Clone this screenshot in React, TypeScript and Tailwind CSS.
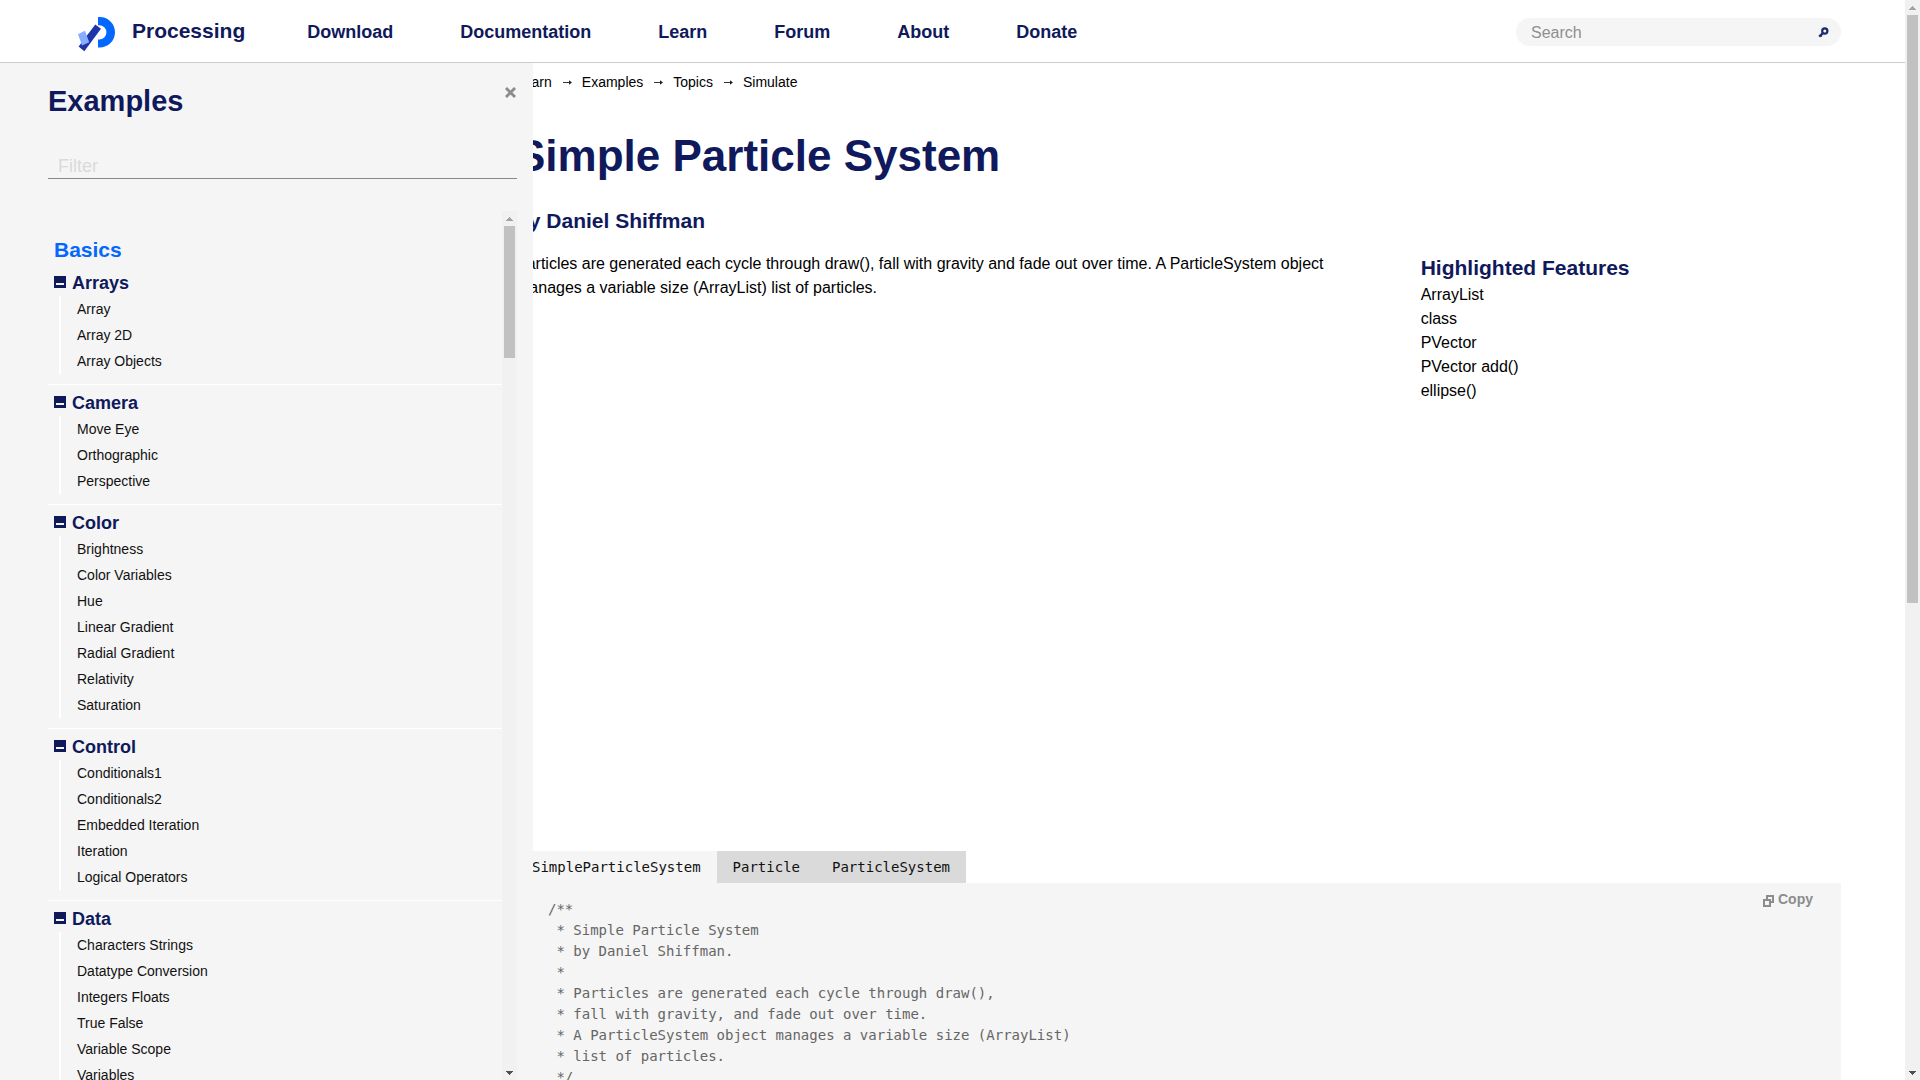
import { useState } from "react";
import clsx from "clsx";

const NAV_LINKS = ["Download", "Documentation", "Learn", "Forum", "About", "Donate"];

const CRUMBS = ["Learn", "Examples", "Topics", "Simulate"];

const FEATURES = ["ArrayList", "class", "PVector", "PVector add()", "ellipse()"];

const BASICS = [
  { name: "Arrays", items: ["Array", "Array 2D", "Array Objects"] },
  { name: "Camera", items: ["Move Eye", "Orthographic", "Perspective"] },
  {
    name: "Color",
    items: [
      "Brightness",
      "Color Variables",
      "Hue",
      "Linear Gradient",
      "Radial Gradient",
      "Relativity",
      "Saturation",
    ],
  },
  {
    name: "Control",
    items: ["Conditionals1", "Conditionals2", "Embedded Iteration", "Iteration", "Logical Operators"],
  },
  {
    name: "Data",
    items: [
      "Characters Strings",
      "Datatype Conversion",
      "Integers Floats",
      "True False",
      "Variable Scope",
      "Variables",
    ],
  },
];

const TABS = ["SimpleParticleSystem", "Particle", "ParticleSystem"];

const CODE = `/**
 * Simple Particle System
 * by Daniel Shiffman.
 *
 * Particles are generated each cycle through draw(),
 * fall with gravity, and fade out over time.
 * A ParticleSystem object manages a variable size (ArrayList)
 * list of particles.
 */`;

function Logo() {
  return (
    <svg width="37" height="35" viewBox="0 0 37 35" aria-hidden="true">
      <path
        d="M20 0h1.700a15.300 15.300 0 0 1 0 30.600H20v-8h1.200a7.200 7.200 0 0 0 0-14.400H20z"
        fill="#0468ff"
      />
      <path d="M17.300 7.500 23 11.800 6.300 34.200.6 29.600z" fill="#1f34ab" />
      <path d="M0 17.200 7 13.800 11.200 25.300 4 28.500z" fill="#85aeff" />
    </svg>
  );
}

function CrumbArrow() {
  return (
    <svg width="9" height="5" viewBox="0 0 9 5" aria-hidden="true">
      <path d="M0 2.500h8" stroke="#333333" strokeWidth="1" />
      <path d="M6 .3 9 2.500 6 4.700z" fill="#222222" />
    </svg>
  );
}

function ScrollTrack({ thumbClass }: { thumbClass: string }) {
  return (
    <div className="flex w-[15px] shrink-0 flex-col items-center bg-[#f1f1f1]" aria-hidden="true">
      <div className="flex h-[15px] shrink-0 items-center">
        <svg width="7" height="4" viewBox="0 0 7 4" shapeRendering="crispEdges">
          <path d="M3 0h1v1h1v1h1v1h1v1H0V3h1V2h1V1h1z" fill="#a3a3a3" />
        </svg>
      </div>
      <div className="min-h-0 w-[11px] flex-1">
        <div className={clsx("bg-[#c1c1c1]", thumbClass)} />
      </div>
      <div className="flex h-[15px] shrink-0 items-center">
        <svg width="7" height="4" viewBox="0 0 7 4" shapeRendering="crispEdges">
          <path d="M0 0h7v1H6v1H5v1H4v1H3V3H2V2H1V1H0z" fill="#505050" />
        </svg>
      </div>
    </div>
  );
}

function Header() {
  return (
    <header className="flex h-[63px] shrink-0 items-center border-b border-[#cccccc] bg-white pr-16 pl-[78px]">
      <a href="#home" className="flex items-center text-[21px] font-bold">
        <span className="mr-[17px] pt-[6px]">
          <Logo />
        </span>
        Processing
      </a>
      <nav className="ml-[62px] flex gap-[67px] pt-[2px] text-[18px] font-bold">
        {NAV_LINKS.map((link) => (
          <a key={link} href={`#${link.toLowerCase()}`}>
            {link}
          </a>
        ))}
      </nav>
      <form
        className="mt-[2px] ml-auto flex h-7 w-[325px] items-center rounded-full bg-[#f5f5f5] pr-3 pl-[15px]"
        onSubmit={(e) => e.preventDefault()}
      >
        <input
          type="text"
          aria-label="Search"
          placeholder="Search"
          className="min-w-0 flex-1 bg-transparent pt-[2px] text-base text-black outline-none placeholder:text-[#8f8f8f]"
        />
        <button type="submit" aria-label="Submit search">
          <svg width="11" height="11" viewBox="0 0 11 11" fill="none" stroke="#1b2a70">
            <circle cx="6.800" cy="4" r="2.600" strokeWidth="2.200" />
            <path d="M5 6 1.200 9.600" strokeWidth="2.400" />
            <path d="M2.600 8.300l1.300 1.300" strokeWidth="1.400" />
          </svg>
        </button>
      </form>
    </header>
  );
}

interface SidebarProps {
  onClose: () => void;
}

function Sidebar({ onClose }: SidebarProps) {
  const [filter, setFilter] = useState("");
  const [closed, setClosed] = useState<string[]>([]);

  const toggle = (name: string) =>
    setClosed((prev) => (prev.includes(name) ? prev.filter((n) => n !== name) : [...prev, name]));

  return (
    <aside className="relative z-10 -mr-[17px] flex w-[533px] shrink-0 flex-col bg-[#f5f5f5] pt-5 pr-4 pl-12">
      <div className="flex items-start justify-between">
        <h2 className="text-[29px] leading-9 font-bold">Examples</h2>
        <button type="button" aria-label="Close" onClick={onClose} className="mt-1 mr-px">
          <svg width="11" height="11" viewBox="0 0 10 10" stroke="#8c8c8c" strokeWidth="2.600">
            <path d="M.9.9l8.200 8.200M9.100.9.9 9.100" />
          </svg>
        </button>
      </div>
      <input
        type="text"
        aria-label="Filter examples"
        placeholder="Filter"
        value={filter}
        onChange={(e) => setFilter(e.target.value)}
        className="mt-[32px] h-[28px] shrink-0 border-b border-[#888888] bg-transparent pt-[3px] pl-[10px] text-[18px] text-black outline-none placeholder:text-[#dadada]"
      />

      <div className="mt-8 flex min-h-0 flex-1">
        <div className="min-w-0 flex-1 overflow-hidden pt-6">
          <h3 className="pl-[6px] text-[21px] leading-[30px] font-bold text-[#0468ff]">Basics</h3>
          {BASICS.map((group) => (
            <section key={group.name} className="border-b border-white pt-2 pb-[10px]">
              <h4 className="mb-[3px] pl-[6px] text-[18px] leading-5 font-bold">
                <button
                  type="button"
                  onClick={() => toggle(group.name)}
                  className="flex items-start gap-[6px]"
                >
                  <svg className="mt-[3px]" width="12" height="12" viewBox="0 0 12 12" aria-hidden="true">
                    <path d="M0 0h12v12H0z" fill="#0f195b" />
                    <path d="M2 7h8v2H2z" fill="#f5f5f5" />
                  </svg>
                  {group.name}
                </button>
              </h4>
              {!closed.includes(group.name) && (
                <ul className="ml-[11px] border-l-2 border-white pl-4 text-[14px] leading-[26px] text-[#111111]">
                  {group.items
                    .filter((item) => item.toLowerCase().includes(filter.toLowerCase()))
                    .map((item) => (
                      <li key={item}>
                        <a href="#example">{item}</a>
                      </li>
                    ))}
                </ul>
              )}
            </section>
          ))}
        </div>
        <ScrollTrack thumbClass="h-[132px]" />
      </div>
    </aside>
  );
}

function CodeViewer() {
  const [active, setActive] = useState(TABS[0]);

  return (
    <div className="font-['DejaVu_Sans_Mono',monospace] text-[14px]">
      <div className="flex" role="tablist">
        {TABS.map((tab) => (
          <button
            key={tab}
            type="button"
            role="tab"
            aria-selected={tab === active}
            onClick={() => setActive(tab)}
            className={clsx(
              "h-8 px-4 text-[#111111]",
              tab === active ? "bg-[#f5f5f5]" : "bg-[#dadada]"
            )}
          >
            {tab}
          </button>
        ))}
      </div>
      <div className="flex items-start justify-between bg-[#f5f5f5] pr-7 pl-8">
        <pre className="py-4 font-['DejaVu_Sans_Mono',monospace] leading-[21px] text-[#666666]">
          {CODE}
        </pre>
        <button
          type="button"
          className="mt-2 flex items-center gap-1 font-['Liberation_Sans',sans-serif] leading-4 font-bold text-[#8c8c8c]"
        >
          <svg className="mt-1" width="11" height="12" viewBox="0 0 11 12" fill="none" stroke="#8c8c8c" strokeWidth="2">
            <path d="M1 5h6v6H1z" />
            <path d="M4 4V1h6v6H7" />
          </svg>
          Copy
        </button>
      </div>
    </div>
  );
}

export default function App() {
  const [sidebarOpen, setSidebarOpen] = useState(true);

  return (
    <div className="flex h-screen overflow-hidden bg-white font-['Liberation_Sans',sans-serif] text-[#0f195b]">
      <div className="flex min-w-0 flex-1 flex-col">
        <Header />
        <div className="flex min-h-0 flex-1">
          {sidebarOpen && <Sidebar onClose={() => setSidebarOpen(false)} />}
          <main className="min-w-0 flex-1 overflow-hidden pt-[9px] pr-16">
            <nav aria-label="Breadcrumb">
              <ol className="flex text-[14px] leading-5 text-black">
                {CRUMBS.map((crumb, i) => (
                  <li key={crumb} className="flex items-center">
                    {i > 0 && (
                      <span className="pr-[10px] pl-[11px]">
                        <CrumbArrow />
                      </span>
                    )}
                    <a href="#crumb">{crumb}</a>
                  </li>
                ))}
              </ol>
            </nav>
            <h1 className="mt-9 text-[44px] leading-[56px] font-bold">Simple Particle System</h1>
            <h3 className="mt-[23px] text-[21px] leading-7 font-bold">by Daniel Shiffman</h3>

            <div className="mt-4 grid min-h-[600px] grid-cols-[minmax(0,2fr)_minmax(0,1fr)] gap-16">
              <p className="pt-px text-base text-black">
                Particles are generated each cycle through draw(), fall with gravity and fade out
                over time. A ParticleSystem object manages a variable size (ArrayList) list of
                particles.
              </p>
              <div className="pt-[3px]">
                <h3 className="mb-px text-[21px] leading-7 font-bold">Highlighted Features</h3>
                <ul className="text-base text-black">
                  {FEATURES.map((feature) => (
                    <li key={feature}>
                      <a href="#reference">{feature}</a>
                    </li>
                  ))}
                </ul>
              </div>
            </div>

            <CodeViewer />
          </main>
        </div>
      </div>
      <ScrollTrack thumbClass="h-[56%]" />
    </div>
  );
}
